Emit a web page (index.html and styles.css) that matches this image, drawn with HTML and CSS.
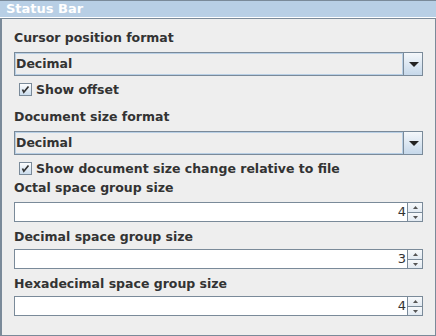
FILE: index.html
```html
<!DOCTYPE html>
<html>
<head>
<meta charset="utf-8">
<link rel="stylesheet" href="styles.css">
</head>
<body>
<div class="title">Status Bar</div>
<div class="panel">
  <div class="label">Cursor position format</div>
  <div class="combo gap7">
    <div class="combo-text">Decimal</div>
    <div class="combo-btn"><svg width="10" height="5" viewBox="0 0 10 5"><path d="M0 0H10L5 5Z" fill="#222"/></svg></div>
  </div>
  <div class="check gap6">
    <svg class="box" width="13" height="13" viewBox="0 0 13 13"><defs><linearGradient id="g1" x1="0" y1="0" x2="0" y2="1"><stop offset="0" stop-color="#ffffff"/><stop offset="1" stop-color="#c9dbec"/></linearGradient></defs><rect x="0.5" y="0.5" width="12" height="12" fill="url(#g1)" stroke="#7a8a99"/><path d="M3.5 6.5L4.8 9.2L9.5 3.5" fill="none" stroke="#333" stroke-width="1.7"/></svg>
    <span>Show offset</span>
  </div>
  <div class="label gap12">Document size format</div>
  <div class="combo gap7">
    <div class="combo-text">Decimal</div>
    <div class="combo-btn"><svg width="10" height="5" viewBox="0 0 10 5"><path d="M0 0H10L5 5Z" fill="#222"/></svg></div>
  </div>
  <div class="check gap6">
    <svg class="box" width="13" height="13" viewBox="0 0 13 13"><defs><linearGradient id="g2" x1="0" y1="0" x2="0" y2="1"><stop offset="0" stop-color="#ffffff"/><stop offset="1" stop-color="#c9dbec"/></linearGradient></defs><rect x="0.5" y="0.5" width="12" height="12" fill="url(#g2)" stroke="#7a8a99"/><path d="M3.5 6.5L4.8 9.2L9.5 3.5" fill="none" stroke="#333" stroke-width="1.7"/></svg>
    <span>Show document size change relative to file</span>
  </div>
  <div class="label gap4">Octal space group size</div>
  <div class="spin gap7">
    <div class="spin-field">4</div>
    <div class="spin-btns">
      <div class="sb up"><svg width="5" height="3" viewBox="0 0 5 3"><path d="M2.5 0L5 3H0Z" fill="#555"/></svg></div>
      <div class="sb down"><svg width="5" height="3" viewBox="0 0 5 3"><path d="M0 0H5L2.5 3Z" fill="#555"/></svg></div>
    </div>
  </div>
  <div class="label gap7">Decimal space group size</div>
  <div class="spin gap5">
    <div class="spin-field">3</div>
    <div class="spin-btns">
      <div class="sb up"><svg width="5" height="3" viewBox="0 0 5 3"><path d="M2.5 0L5 3H0Z" fill="#555"/></svg></div>
      <div class="sb down"><svg width="5" height="3" viewBox="0 0 5 3"><path d="M0 0H5L2.5 3Z" fill="#555"/></svg></div>
    </div>
  </div>
  <div class="label gap7">Hexadecimal space group size</div>
  <div class="spin gap5">
    <div class="spin-field">4</div>
    <div class="spin-btns">
      <div class="sb up"><svg width="5" height="3" viewBox="0 0 5 3"><path d="M2.5 0L5 3H0Z" fill="#555"/></svg></div>
      <div class="sb down"><svg width="5" height="3" viewBox="0 0 5 3"><path d="M0 0H5L2.5 3Z" fill="#555"/></svg></div>
    </div>
  </div>
</div>
</body>
</html>
```
FILE: styles.css
```css
* { box-sizing: border-box; }
html, body { margin: 0; padding: 0; }
body {
  width: 436px;
  height: 336px;
  background: #eeeeee;
  font-family: "DejaVu Sans", sans-serif;
  font-size: 12.5px;
  color: #333333;
  overflow: hidden;
}
.title {
  height: 18px;
  background: #b8cfe5;
  border-top: 1px solid #7a8a99;
  border-bottom: 1px solid #ffffff;
  color: #ffffff;
  font-weight: bold;
  font-size: 13px;
  line-height: 16px;
  padding-left: 6px;
}
.panel {
  height: 318px;
  border-top: 1px solid #7a8a99;
  border-left: 2px solid #7a8a99;
  border-right: 1px solid #7a8a99;
  border-bottom: 1px solid #7a8a99;
  padding: 11px 12px 0 12px;
  display: flex;
  flex-direction: column;
}
.label {
  height: 15px;
  line-height: 15px;
  font-weight: bold;
  white-space: nowrap;
}
.gap4 { margin-top: 4px; }
.gap5 { margin-top: 5px; }
.gap6 { margin-top: 6px; }
.gap7 { margin-top: 7px; }
.gap12 { margin-top: 12px; }
.combo {
  height: 24px;
  border: 1px solid #7a8a99;
  display: flex;
}
.combo-text {
  flex: 1;
  border: 1px solid #b8cfe5;
  background: #eeeeee;
  font-weight: bold;
  line-height: 20px;
  padding-left: 0;
}
.combo-btn {
  width: 19px;
  border-left: 1px solid #7a8a99;
  background: linear-gradient(#f4f7fa, #c6d8ea);
  display: flex;
  align-items: center;
  justify-content: center;
}
.combo-btn svg { display: block; margin-left: 1px; }
.check {
  height: 15px;
  display: flex;
  align-items: center;
  padding-left: 5px;
  font-weight: bold;
  white-space: nowrap;
  line-height: 15px;
}
.check .box { display: block; margin-right: 4px; flex: none; }
.spin {
  height: 20px;
  border: 1px solid #7a8a99;
  display: flex;
}
.spin-field {
  flex: 1;
  background: #ffffff;
  text-align: right;
  font-size: 13px;
  line-height: 18px;
  padding-right: 1px;
}
.spin-btns {
  width: 15px;
  border-left: 1px solid #7a8a99;
  display: flex;
  flex-direction: column;
}
.sb {
  display: flex;
  align-items: center;
  justify-content: center;
  background: linear-gradient(#f7f9fb, #e2eaf2);
}
.sb svg { display: block; }
.sb.up { height: 10px; border-bottom: 1px solid #7a8a99; }
.sb.down { flex: 1; }
```
